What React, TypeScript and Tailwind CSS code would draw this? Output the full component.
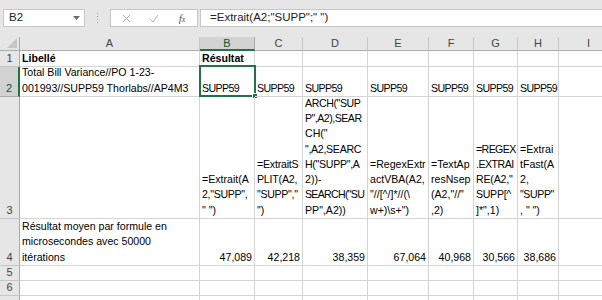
import React from "react";

const COLS = [180, 55, 48, 65, 61, 45, 44, 41, 60];
const LETTERS = ["A", "B", "C", "D", "E", "F", "G", "H", "I"];
const ROWS = [16, 30, 122, 47, 15, 15, 15];

type Line = { t: string; k?: string };
type CellDef = { lines?: Line[]; bold?: boolean; right?: boolean };

const L = (t: string, k = ""): Line => ({ t, k });
const supp = { lines: [L("SUPP59", "tracking-[-0.6px]")] };

const data: Record<number, CellDef[]> = {
  1: [
    { lines: [L("Libellé")], bold: true },
    { lines: [L("Résultat")], bold: true },
  ],
  2: [
    { lines: [L("Total Bill Variance//PO 1-23-"), L("001993//SUPP59 Thorlabs//AP4M3")] },
    supp,
    supp,
    supp,
    supp,
    supp,
    supp,
    supp,
  ],
  3: [
    {},
    { lines: [L("=Extrait(A"), L('2,"SUPP",', "tracking-[-0.3px]"), L('" ")')] },
    {
      lines: [
        L("=ExtraitS", "tracking-[-0.2px]"),
        L("PLIT(A2,", "tracking-[-0.2px]"),
        L('"SUPP","', "tracking-[-0.3px]"),
        L('")'),
      ],
    },
    {
      lines: [
        L('ARCH("SUP', "tracking-[-0.4px]"),
        L('P",A2),SEAR', "tracking-[-0.5px]"),
        L('CH("'),
        L('",A2,SEARC', "tracking-[-0.3px]"),
        L('H("SUPP",A', "tracking-[-0.3px]"),
        L("2))-"),
        L('SEARCH("SU', "tracking-[-0.7px]"),
        L('PP",A2))'),
      ],
    },
    { lines: [L("=RegexExtr"), L("actVBA(A2,"), L('"//[^/]*//(\\'), L('w+)\\s+")')] },
    { lines: [L("=TextAp"), L("resNsep"), L('(A2,"//"'), L(",2)")] },
    {
      lines: [
        L("=REGEX", "tracking-[-0.6px]"),
        L(".EXTRAI", "tracking-[-0.5px]"),
        L('RE(A2,"', "tracking-[-0.2px]"),
        L("SUPP[^", "tracking-[-0.3px]"),
        L(']*",1)'),
      ],
    },
    { lines: [L("=Extrai"), L("tFast(A"), L("2,"), L('"SUPP"', "tracking-[-0.4px]"), L(', " ")')] },
  ],
  4: [
    { lines: [L("Résultat moyen par formule en"), L("microsecondes avec 50000"), L("itérations")] },
    { lines: [L("47,089")], right: true },
    { lines: [L("42,218")], right: true },
    { lines: [L("38,359")], right: true },
    { lines: [L("67,064")], right: true },
    { lines: [L("40,968")], right: true },
    { lines: [L("30,566")], right: true },
    { lines: [L("38,686")], right: true },
  ],
};

function Cell({ w, h, def, selected }: { w: number; h: number; def?: CellDef; selected?: boolean }) {
  return (
    <div
      className="relative shrink-0 border-r border-b border-[#d4d4d4] flex flex-col justify-end overflow-visible"
      style={{ width: w, height: h }}
    >
      <div className="overflow-hidden flex flex-col justify-end h-full">
        {def?.lines?.map((l, i) => (
          <div
            key={i}
            className={`whitespace-pre leading-[15.3px] px-[2px] shrink-0 ${l.k} ${def.bold ? "font-bold" : ""} ${
              def.right ? "text-right" : "text-left"
            }`}
          >
            {l.t}
          </div>
        ))}
      </div>
      {selected && (
        <div className="absolute -left-[1px] -top-[2px] w-[57px] h-[32px] border-2 border-[#217346] pointer-events-none">
          <div className="absolute -right-[4px] -bottom-[4px] w-[6px] h-[6px] bg-[#217346] border border-white" />
        </div>
      )}
    </div>
  );
}

export default function App() {
  return (
    <div
      className="w-[602px] h-[300px] overflow-hidden bg-white text-[10.6px] text-black"
      style={{ fontFamily: '"Liberation Sans", Arial, sans-serif' }}
    >
      {/* Formula bar */}
      <div className="h-[37px] bg-[#e6e6e6] flex items-start pt-[9px] pl-[3px]">
        <div className="w-[82px] h-[18px] bg-white border border-[#c6c6c6] flex items-center justify-between pl-[5px] pr-[4px] text-[11.5px] text-[#222]">
          <span>B2</span>
          <svg width="7" height="4" viewBox="0 0 7 4">
            <path d="M0 0 L7 0 L3.5 4 Z" fill="#6a6a6a" />
          </svg>
        </div>
        <div className="w-[25px] h-[18px] flex items-center justify-center">
          <div className="flex flex-col gap-[2px]">
            <div className="w-[1px] h-[1px] bg-[#9a9a9a]" />
            <div className="w-[1px] h-[1px] bg-[#9a9a9a]" />
            <div className="w-[1px] h-[1px] bg-[#9a9a9a]" />
            <div className="w-[1px] h-[1px] bg-[#9a9a9a]" />
          </div>
        </div>
        <div className="w-[88px] h-[18px] bg-white border border-[#c6c6c6] flex items-center">
          <div className="w-[30px] flex justify-center">
            <svg width="9" height="9" viewBox="0 0 9 9">
              <path d="M1 1 L8 8 M8 1 L1 8" stroke="#b0b0b0" strokeWidth="1" />
            </svg>
          </div>
          <div className="w-[26px] flex justify-center">
            <svg width="10" height="9" viewBox="0 0 10 9">
              <path d="M1 5 L4 8 L9 1" stroke="#b0b0b0" strokeWidth="1" fill="none" />
            </svg>
          </div>
          <div
            className="w-[30px] flex justify-center text-[11px] italic text-[#555]"
            style={{ fontFamily: '"Liberation Serif", serif' }}
          >
            <span>
              f<span className="text-[8px]">x</span>
            </span>
          </div>
        </div>
        <div className="ml-[2px] flex-1 h-[18px] bg-white border border-[#c6c6c6] border-r-0 flex items-center pl-[9px] text-[11.5px] text-[#222]">
          =Extrait(A2;"SUPP";" ")
        </div>
      </div>

      {/* Column headers */}
      <div className="flex h-[14px]">
        <div className="relative w-[20px] shrink-0 h-full bg-[#e6e6e6] border-r border-b border-[#ababab]">
          <svg className="absolute right-[2px] bottom-[2px]" width="10" height="10" viewBox="0 0 10 10">
            <path d="M10 0 L10 10 L0 10 Z" fill="#c6c6c6" />
          </svg>
        </div>
        {COLS.map((w, i) => (
          <div
            key={i}
            className={`shrink-0 h-full flex items-center justify-center border-r text-[11px] ${
              i === 1
                ? "bg-[#d2d2d2] border-r-[#ababab] border-b-2 border-b-[#217346] text-[#0f5132]"
                : "bg-[#e6e6e6] border-r-[#c6c6c6] border-b border-b-[#ababab] text-[#444]"
            }`}
            style={{ width: w }}
          >
            {LETTERS[i]}
          </div>
        ))}
      </div>

      {/* Rows */}
      {ROWS.map((h, ri) => {
        const r = ri + 1;
        const defs = data[r] || [];
        return (
          <div key={r} className="flex" style={{ height: h }}>
            <div
              className={`w-[20px] shrink-0 h-full flex items-end justify-center pb-[1px] text-[11px] leading-[13px] border-b ${
                r === 2
                  ? "bg-[#d2d2d2] border-r-2 border-r-[#217346] border-b-[#ababab] text-[#0f5132]"
                  : "bg-[#e6e6e6] border-r border-r-[#ababab] border-b-[#c6c6c6] text-[#444]"
              }`}
            >
              {r < 7 ? r : ""}
            </div>
            {COLS.map((w, ci) => (
              <Cell key={ci} w={w} h={h} def={defs[ci]} selected={r === 2 && ci === 1} />
            ))}
          </div>
        );
      })}
    </div>
  );
}
